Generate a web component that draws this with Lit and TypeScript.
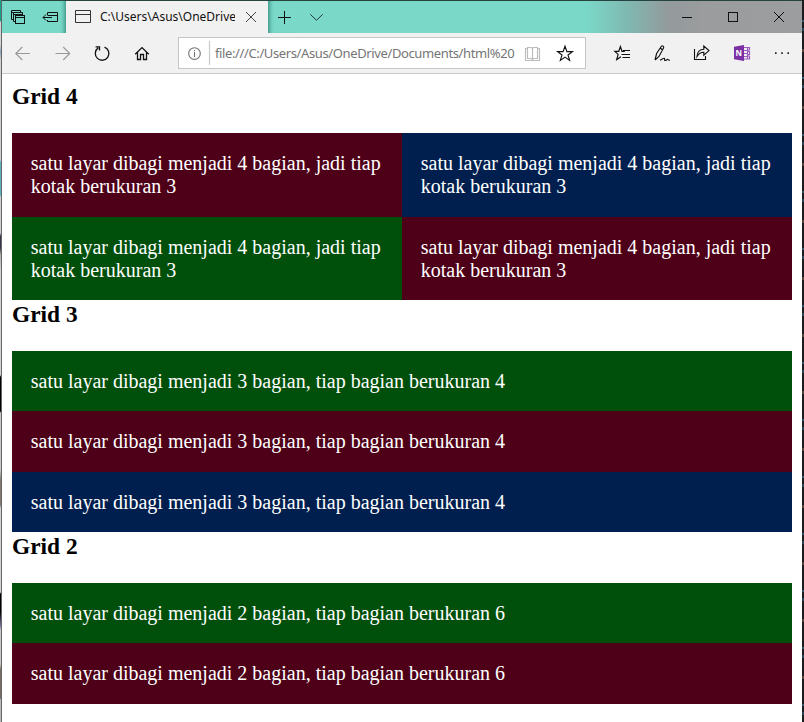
import { LitElement, html, svg, css } from "lit";
import { customElement, property } from "lit/decorators.js";

type Tone = "maroon" | "navy" | "green";

const icon = (box: string, body: unknown, cls = "") => {
  const [, , w, h] = box.split(" ");
  return html`<svg class=${"ic " + cls} width=${w} height=${h} viewBox=${box}>${body}</svg>`;
};

const star = "M565 46.3L566.9 51.6H572.4L568 55L569.6 60.4L565 57.1L560.4 60.4L562 55L557.6 51.6H563.1Z";

@customElement("title-bar")
class TitleBar extends LitElement {
  static styles = css`
    :host { display: flex; height: 32px; font-family: "Noto Sans", "Open Sans", sans-serif;
      background: linear-gradient(90deg, #79d9c9 0, #7ad8c8 585px, #7fb9b1 625px, #939b9d 665px, #9a9c9d 700px, #9c9d9e 100%); }
    .ic { display: block; flex: none; fill: none; stroke: #111; stroke-width: 1; }
    .lead { box-shadow: inset -6px 0 5px -5px #2c7d72; }
    .tab { display: flex; width: 202px; background: #f1f1f1; overflow: hidden; }
    .title { width: 135px; margin-right: 1px; overflow: hidden; white-space: nowrap; font-size: 12px; line-height: 32px; letter-spacing: 0; color: #111; }
    .after { box-shadow: inset 5px 0 5px -4px #2c7d72; }
    .gap { flex: 1; }
  `;
  render() {
    return html`
      ${icon("2 1 64 32", svg`
        <path d="M13.5 19.5H11.5V10.5H20.5V12.5M11.5 12.5H13.5"/><path d="M15.5 21.5H13.5V12.5H22.5V15M13.5 14.5H22.5"/>
        <rect x="15.5" y="15.5" width="9" height="8"/><path d="M15.5 17.5H24.5"/>
        <path d="M47.5 15V12.5H57.5V21.5H47.5V20M47.5 15.5H57.5M43 17.5H52M46 14.5L43 17.5L46 20.5"/>`, "lead")}
      <div class="tab">
        ${icon("66 1 34 32", svg`<path d="M75.5 10.5H90.5V22.5H75.5ZM75.5 14.5H90.5" stroke="#333"/>`)}
        <div class="title">C:\\Users\\Asus\\OneDrive</div>
        ${icon("236 1 32 32", svg`<path d="M246 12L256 22M256 12L246 22" stroke="#444"/>`)}
      </div>
      ${icon("268 1 32 32", svg`<path d="M278 17.5H291M284.5 11V24"/>`, "after")}
      ${icon("300 1 32 32", svg`<path d="M310.3 14.3L316.5 20.3L322.7 14.3" stroke="#234"/>`)}
      <div class="gap"></div>
      ${icon("664 1 46 32", svg`<path d="M682 17.5H692"/>`)}
      ${icon("710 1 46 32", svg`<rect x="728.5" y="12.5" width="9" height="9"/>`)}
      ${icon("756 1 46 32", svg`<path d="M774 12L784 22M784 12L774 22"/>`)}
    `;
  }
}

@customElement("tool-bar")
class ToolBar extends LitElement {
  static styles = css`
    :host { display: flex; box-sizing: border-box; height: 41px; background: #f1f1f1; border-bottom: 1px solid #c9c9c9;
      font-family: "Noto Sans", "Open Sans", sans-serif; }
    .ic { display: block; flex: none; fill: none; stroke: #111; stroke-width: 1.15; }
    .address { display: flex; box-sizing: border-box; width: 408px; height: 32px; margin: 4px 16px; background: #fff; border: 1px solid #c6c6c6; }
    .url { width: 306px; overflow: hidden; white-space: nowrap; font-size: 13px; line-height: 31px; letter-spacing: -0.38px; color: #757575; }
    .badge { fill: #fff; stroke: none; font: bold 8px "Open Sans", sans-serif; }
  `;
  render() {
    return html`
      ${icon("2 33 40 40", svg`<path d="M15.8 53.5H30M22.3 47L15.8 53.5L22.3 60" stroke="#999"/>`)}
      ${icon("42 33 40 40", svg`<path d="M55.5 53.5H69.7M63.2 47L69.7 53.5L63.2 60" stroke="#999"/>`)}
      ${icon("82 33 40 40", svg`<path d="M104.5 47.1A6.8 6.8 0 1 1 98.2 47.9M95.6 46.8H99.5V50.6" stroke-width="1.3"/>`)}
      ${icon("122 33 40 40", svg`<path d="M135.2 54.3L142 47.6L148.8 54.3M137.5 52.5V59.5H140.5V54.5H143.5V59.5H146.5V52.5" stroke-width="1.3"/>`)}
      <div class="address">
        ${icon("179 38 36 30", svg`<circle cx="194.5" cy="53.5" r="5.8" stroke="#777"/><path d="M194.5 52V57M194.5 50V51.2" stroke="#777"/><path d="M209.5 41V65" stroke="#c8c8c8"/>`)}
        <div class="url">file:///C:/Users/Asus/OneDrive/Documents/html%20</div>
        ${icon("521 38 26 30", svg`<path d="M527.5 47.5H531.5L532.5 48.5L533.5 47.5H537.5V58.5H533.5L532.5 59.5L531.5 58.5H527.5ZM532.5 48V60M527.5 48.5H525.5V60.5H539.5V48.5H537.5" stroke="#bcbcbc"/>`)}
        ${icon("547 38 38 30", svg`<path d=${star}/>`)}
      </div>
      ${icon("602 33 40 40", svg`<path d="M624.8 51.3H622L620.4 46.5L618.8 51.3H614.8L618.1 54.4L616.7 59.6L621 56.7M623 50.5H630M621.5 54.5H630M622.5 57.5H630"/>`)}
      ${icon("642 33 40 40", svg`<path d="M655 60L656.6 53.5L661.4 46.3C662.4 45.1 664.3 46.6 663.5 48L659 56.4L655 60M660.2 48L662.7 50M660 60.3C662.6 58.7 664 57.9 664.5 58.4C665 59 664 60.2 664.8 60.5C666 60.8 667 59 667.8 59.5L669.8 60.4"/>`)}
      ${icon("682 33 40 40", svg`<path d="M694.5 49V59.5H705.5V56M697 56.5C697.2 52 700 49.2 703.8 49.2V46L709 50.6L703.8 55.3V52.3C700.8 52.2 698.8 53.6 697 56.5Z"/>`)}
      ${icon("722 33 40 40", svg`<path d="M743 47.5H747.5V59H743M743 50.5H747M743 53.5H747M743 56.5H747M748 47.5H749.5V50H748M748 51.5H749.5V54.5H748M748 56H749.5V59H748" stroke="#9b5ac0"/><path d="M734 46.7L744 45V61L734 59.3Z" fill="#7b2fa5" stroke="none"/><text class="badge" x="735.6" y="56">N</text>`)}
      ${icon("762 33 40 40", svg`<path d="M775 52.3h1.6v1.6h-1.6zM781.2 52.3h1.6v1.6h-1.6zM787.4 52.3h1.6v1.6h-1.6z" fill="#222" stroke="none"/>`)}
    `;
  }
}

@customElement("grid-section")
class GridSection extends LitElement {
  @property({ type: Number }) parts = 2;
  @property({ type: Number }) columns = 1;
  @property() text = "";
  @property({ attribute: false }) tones: Tone[] = [];
  static styles = css`
    :host { display: block; }
    h3 { margin: 0; padding: 1px 0 22.8px; font-size: 23.4px; line-height: 27px; color: #000; }
    .cells { display: grid; grid-template-columns: 1fr; }
    .two { grid-template-columns: 1fr 1fr; }
    .cell { padding: 18.75px 18.75px 18.65px; font-size: 20px; line-height: 23px; color: #fff; }
    .two .cell { padding-top: 19px; padding-bottom: 18.6px; }
    .maroon { background: #4e0018; }
    .navy { background: #001f4f; }
    .green { background: #00500b; }
  `;
  render() {
    return html`
      <h3>Grid ${this.parts}</h3>
      <div class=${this.columns === 2 ? "cells two" : "cells"}>
        ${this.tones.map((t) => html`<div class="cell ${t}">${this.text}</div>`)}
      </div>`;
  }
}

@customElement("app-root")
class AppRoot extends LitElement {
  static styles = css`
    :host { display: flex; width: 804px; height: 722px; overflow: hidden; background: #fff;
      font-family: "Liberation Serif", "Times New Roman", serif; }
    .left { width: 2px; box-sizing: border-box; border-right: 1px solid #666;
      background: linear-gradient(#12a38c 0 21px, #d2d4d5 22px 44px, #8ba5bb 52px, #cfd0d0 60px 160px, #58b3bf 162px 195px, #cfd0d0 197px 233px, #34364a 236px 248px, #b5b0a9 255px, #d2d2d2 270px 375px, #000 377px 411px, #c8c8c8 413px 470px, #817970 480px 505px, #d2d2d2 508px 592px, #000 594px 612px, #7478a0 626px, #c8c8c8 630px 664px, #766d60 670px 698px, #bbb 700px); }
    .right { width: 2px; background: repeating-linear-gradient(#1c1c1e 0 20px, #31536a 20px 22px, #1c1c1e 22px 28px, #294558 28px 31px, #1c1c1e 31px 49px, #554238 49px 52px, #1c1c1e 52px 57px); }
    .window { width: 800px; box-sizing: border-box; border-top: 1px solid #25443f; }
    .page { padding: 8.2px 10px 0; }
  `;
  render() {
    return html`
      <div class="left"></div>
      <div class="window">
        <title-bar></title-bar>
        <tool-bar></tool-bar>
        <div class="page">
          <grid-section .parts=${4} .columns=${2} .tones=${["maroon", "navy", "green", "maroon"] as Tone[]}
            text="satu layar dibagi menjadi 4 bagian, jadi tiap kotak berukuran 3"></grid-section>
          <grid-section .parts=${3} .tones=${["green", "maroon", "navy"] as Tone[]}
            text="satu layar dibagi menjadi 3 bagian, tiap bagian berukuran 4"></grid-section>
          <grid-section .parts=${2} .tones=${["green", "maroon"] as Tone[]}
            text="satu layar dibagi menjadi 2 bagian, tiap bagian berukuran 6"></grid-section>
        </div>
      </div>
      <div class="right"></div>
    `;
  }
}
